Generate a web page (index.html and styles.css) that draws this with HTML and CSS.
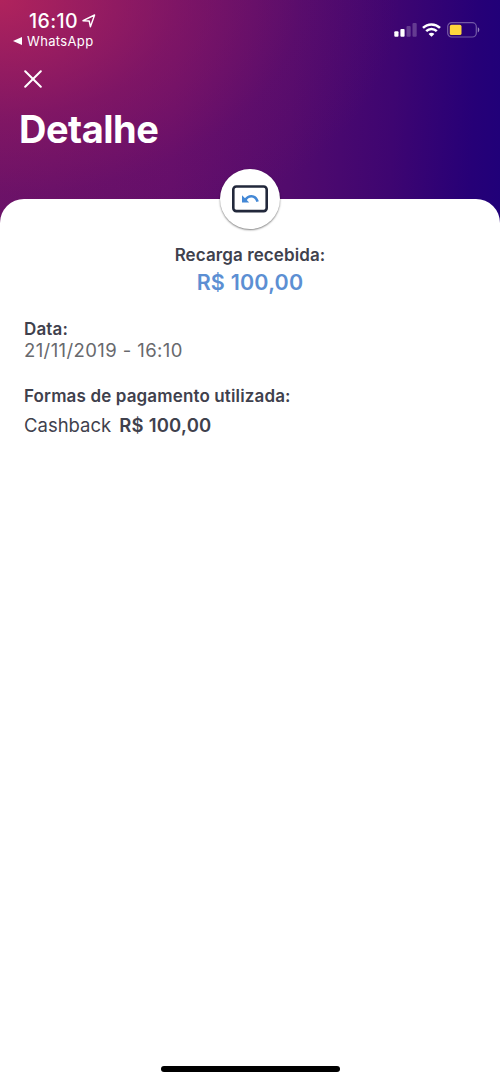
FILE: index.html
```html
<!DOCTYPE html>
<html lang="pt-BR">
<head>
<meta charset="utf-8">
<title>Detalhe</title>
<link rel="stylesheet" href="styles.css">
</head>
<body>
<div class="screen">
  <header class="header">
    <div class="status">
      <div class="status-left">
        <div class="clock"><span class="time">16:10</span>
          <svg class="location" width="14" height="14" viewBox="0 0 14 14"><path d="M1 6.7 12.6 1 8.4 12.8 7.2 7Z" fill="none" stroke="#fff" stroke-width="1.4" stroke-linejoin="round"/></svg>
        </div>
        <div class="back"><svg width="9" height="8" viewBox="0 0 9 8"><path d="M0 4 9 0V8Z" fill="#fff"/></svg><span class="back-label">WhatsApp</span></div>
      </div>
      <div class="status-right">
        <svg width="23" height="14" viewBox="0 0 23 14" fill="#fff"><rect x="0.3" y="8.3" width="4.2" height="5.4" rx="1"/><rect x="6.4" y="6" width="4.2" height="7.7" rx="1"/><g opacity=".22"><rect x="12.5" y="3" width="4.2" height="10.7" rx="1"/><rect x="18.5" y="0" width="4.2" height="13.7" rx="1"/></g></svg>
        <svg class="wifi" width="19" height="14" viewBox="0 0 19 14" fill="none" stroke="#fff" stroke-width="2.5"><path d="M1 4.9C5.8.2 13.2.2 18 4.9M4.2 8.1c3-2.9 7.6-2.9 10.6 0"/><path d="M9.5 13.8 6.6 10.9c1.6-1.5 4.2-1.5 5.8 0Z" fill="#fff" stroke="none"/></svg>
        <svg class="battery" width="33" height="16" viewBox="0 0 33 16"><rect x=".7" y=".7" width="28.6" height="14.3" rx="4" fill="none" stroke="#fff" stroke-opacity=".35" stroke-width="1.2"/><rect x="2.8" y="2.7" width="11.7" height="10.4" rx="1.7" fill="#ffd63d"/><path d="M30.8 5.3c2 .8 2 4.3 0 5.1Z" fill="#fff" opacity=".5"/></svg>
      </div>
    </div>
    <svg class="close" width="18" height="18" viewBox="0 0 18 18"><path d="M1.2 1.2 16.8 16.8M16.8 1.2 1.2 16.8" stroke="#fff" stroke-width="2" stroke-linecap="round"/></svg>
    <h1 class="title">Detalhe</h1>
  </header>
  <main class="sheet">
    <div class="badge">
      <svg width="36" height="28" viewBox="0 0 36 28"><rect x="1.3" y="1.5" width="33.4" height="24.6" rx="3" fill="none" stroke="#22283b" stroke-width="2.6"/><path d="M13 15.3C16 10.2 23.2 9.2 25.6 16.6" fill="none" stroke="#4388d6" stroke-width="2.6"/><path d="M10 10.2 17.2 17.4H10Z" fill="#4388d6"/></svg>
    </div>
    <p class="received">Recarga recebida:</p>
    <p class="amount">R$ 100,00</p>
    <section class="details">
      <p class="label date-label">Data:</p>
      <p class="date">21/11/2019 - 16:10</p>
      <p class="label pay-label">Formas de pagamento utilizada:</p>
      <p class="payment"><span class="method">Cashback</span><span class="value">R$ 100,00</span></p>
    </section>
    <div class="home"></div>
  </main>
</div>
</body>
</html>
```
FILE: styles.css
```css
* { box-sizing: border-box; }
body { margin: 0; font-family: Inter, sans-serif; }
p, h1 { margin: 0; white-space: nowrap; }
svg { display: block; flex-shrink: 0; }
.screen {
  height: 1082px;
  display: flex;
  flex-direction: column;
  background:
    radial-gradient(ellipse 400px 260px at 0 0, rgba(192, 39, 90, .82), rgba(165, 30, 94, .42) 45%, rgba(140, 24, 100, .14) 75%, rgba(106, 16, 104, 0)),
    linear-gradient(92deg, #671168 0, #610e6b 35%, #520b6d 58%, #3e0571 78%, #260077 94%, #200079 100%);
  background-size: 500px 240px;
  background-repeat: no-repeat;
}
.header { height: 199px; color: #fff; }
.status { height: 70px; display: flex; justify-content: space-between; padding: 10px 20px 0 13px; }
.clock { display: flex; align-items: center; height: 22px; padding-left: 16px; gap: 5px; }
.time { font-size: 19.5px; font-weight: 500; letter-spacing: .4px; }
.location { margin-left: -1px; }
.back { display: flex; align-items: center; gap: 5px; height: 18px; }
.back-label { font-size: 13px; letter-spacing: .35px; font-weight: 400; }
.status-right { display: flex; height: 40px; align-items: center; }
.wifi { margin-left: 5px; }
.battery { margin-left: 6px; }
.close { margin-left: 24px; }
.title { padding: 18px 0 0 19px; font-size: 38px; line-height: 47px; font-weight: 700; letter-spacing: -.5px; }
.sheet {
  flex: 1;
  display: flex;
  flex-direction: column;
  background: #fff;
  border-radius: 24px 24px 0 0;
  color: #3f414d;
}
.badge {
  width: 60px;
  height: 60px;
  margin: -30px auto 0;
  display: flex;
  align-items: center;
  justify-content: center;
  border-radius: 50%;
  background: #fff;
  box-shadow: 0 1px 2px rgba(0, 0, 0, .5);
}
.received { margin-top: 15px; text-align: center; font-size: 17px; line-height: 22px; font-weight: 600; letter-spacing: .1px; }
.amount { margin-top: 2px; text-align: center; font-size: 21.5px; line-height: 28px; font-weight: 600; letter-spacing: .2px; color: #5c8fd3; }
.details { padding: 22px 24px 0; }
.label { font-size: 17px; line-height: 22px; font-weight: 600; letter-spacing: .14px; }
.date { font-size: 18.5px; line-height: 21px; letter-spacing: .4px; color: #68696d; }
.pay-label { margin-top: 24px; }
.payment { display: flex; gap: 8px; margin-top: 6px; font-size: 18.5px; line-height: 24px; }
.value { font-weight: 600; letter-spacing: .22px; }
.home { width: 179px; height: 6px; margin: auto auto 10px; border-radius: 3px; background: #000; }
```
